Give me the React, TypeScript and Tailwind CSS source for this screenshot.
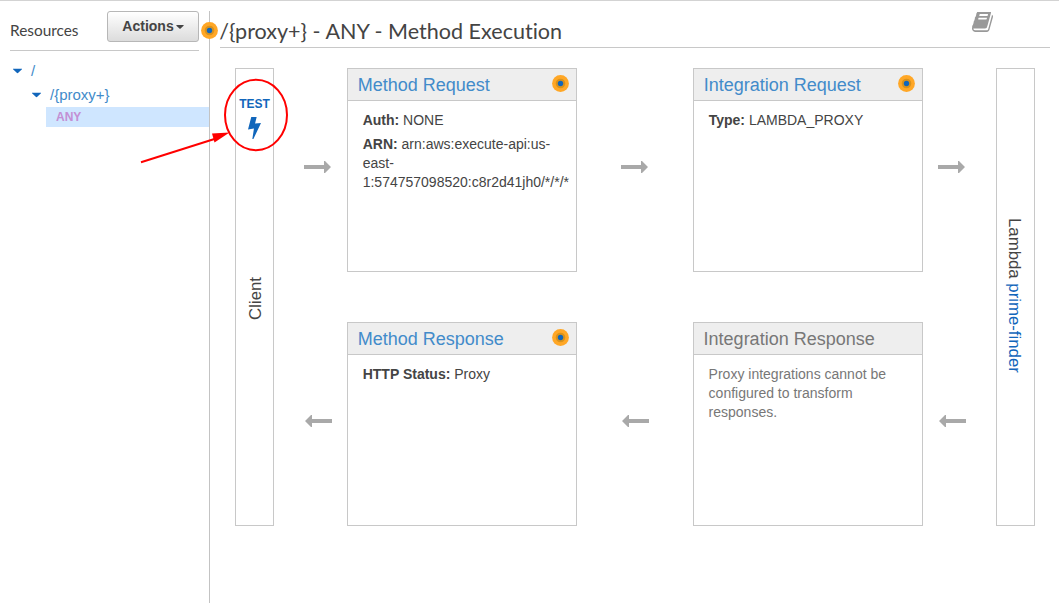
import type { ReactNode } from "react";

function Marker({ className = "" }: { className?: string }) {
  return (
    <svg className={`size-[17px] shrink-0 ${className}`} viewBox="0 0 17 17">
      <circle cx="8.5" cy="8.5" r="8.4" fill="#ffa726" />
      <circle cx="8.5" cy="8.5" r="4.8" fill="#d9921c" />
      <circle cx="8.5" cy="8.5" r="2.7" fill="#1166bb" />
    </svg>
  );
}

function Caret({ className = "" }: { className?: string }) {
  return (
    <svg className={`shrink-0 ${className}`} viewBox="0 0 9 5">
      <path d="M0 0H9V.8L4.500 5 0 .8Z" fill="currentColor" />
    </svg>
  );
}

function Arrow({ left = false, className = "" }: { left?: boolean; className?: string }) {
  return (
    <svg className={`mt-[93px] h-3 w-[27px] ${className}`} viewBox="0 0 27 12">
      <path
        d={left ? "M27 4V8H7V12H6L0 6 6 0H7V4Z" : "M0 4V8H20V12H21L27 6 21 0H20V4Z"}
        fill="#a9a9a9"
      />
    </svg>
  );
}

function Book() {
  return (
    <svg className="h-5 w-[21px]" viewBox="0 0 1664 1664" preserveAspectRatio="none">
      <path
        transform="translate(0 -270) scale(1 1.16)"
        fill="#999"
        d="M1639 478q40 57 18 129l-275 906q-19 64-76.5 107.5t-122.5 43.5h-923q-77 0-148.5-53.5t-99.5-131.5q-24-67-2-127 0-4 3-27t4-37q1-8-3-21.5t-3-19.5q2-11 8-21t16.5-23.5 16.5-23.5q23-38 45-91.5t30-91.5q3-10 .5-30t-.5-28q3-11 17-28t17-23q21-36 42-92t25-90q1-9-2.5-32t.5-28q4-13 22-30.5t22-22.5q19-26 42.5-84.5t27.5-96.5q1-8-3-25.5t-2-26.5q2-8 9-18t18-23 17-21q8-12 16.5-30.5t15-35 16-36 19.5-32 26.5-23.5 36-11.5 47.5 5.5l-1 3q38-9 51-9h761q74 0 114 56t18 130l-274 906q-36 119-71.5 153.5t-128.5 34.5h-869q-27 0-38 15-11 16-1 43 24 70 144 70h923q29 0 56-15.5t35-41.5l300-987q7-22 5-57 38 15 59 43zm-1064 2q-4 13 2 22.5t20 9.5h608q13 0 25.5-9.5t16.5-22.5l21-64q4-13-2-22.5t-20-9.5h-608q-13 0-25.5 9.5t-16.5 22.5zm-83 256q-4 13 2 22.5t20 9.5h608q13 0 25.5-9.5t16.5-22.5l21-64q4-13-2-22.5t-20-9.5h-608q-13 0-25.5 9.5t-16.5 22.5z"
      />
    </svg>
  );
}

function Card({ title, muted = false, children }: { title: string; muted?: boolean; children: ReactNode }) {
  return (
    <section className={`flex flex-col border border-[#c8c8c8] ${muted ? "text-[#777]" : "text-[#444]"}`}>
      <header className={`flex h-8 shrink-0 items-center justify-between border-b border-[#c8c8c8] bg-[#eee] pr-[7px] ${muted ? "pl-[9.6px]" : "pl-[9.7px]"}`}>
        <h2 className={`text-[18px] leading-[30px] ${muted ? "text-[#777]" : "text-[#428bca]"}`}>{title}</h2>
        {!muted && <Marker className="-mt-0.5" />}
      </header>
      <div className={`flex flex-col gap-[5px] pt-[10px] pr-[6px] text-[14px] leading-[19px] ${muted ? "pl-[14.6px]" : "pl-[14.7px]"}`}>
        {children}
      </div>
    </section>
  );
}

function Sidebar() {
  return (
    <aside className="mt-[10px] flex w-[210px] shrink-0 flex-col border-r border-[#c3c3c3]">
      <div className="mr-[10px] ml-[10px] flex h-10 justify-between border-b border-[#c8c8c8]">
        <h2 className="pt-[7px] font-['Lato',sans-serif] text-[15.4px] leading-6 text-[#444]">Resources</h2>
        <button className="flex h-[31px] w-[92px] items-center justify-center gap-[2px] rounded-[3px] border border-[#b7b7b7] bg-linear-to-b from-white to-[#dcdcdc] text-[14px] font-bold text-[#444]">
          Actions
          <Caret className="h-1 w-[8px]" />
        </button>
      </div>
      <ul className="pt-[8px] text-[15px] leading-6 text-[#428bca]">
        <li className="flex items-center pl-[12.5px]">
          <Caret className="mr-[9.5px] h-[5px] w-[9px] -translate-y-[0.5px] text-[#1166bb]" />/
        </li>
        <li className="flex items-center pl-[31.5px]">
          <Caret className="mr-[9.5px] h-[5px] w-[9px] -translate-y-[0.5px] text-[#1166bb]" />/{"{proxy+}"}
        </li>
        <li className="ml-[46px] h-5 bg-[#cfe6ff] pl-[10px] text-[12px] leading-5 font-bold text-[#c38fd4]">ANY</li>
      </ul>
    </aside>
  );
}

export default function App() {
  return (
    <div className="relative flex h-[603px] w-[1059px] overflow-hidden border-t border-[#d3d3d3] bg-white font-['Liberation_Sans',Arial,sans-serif] text-[#444]">
      <Sidebar />
      <main className="flex-1">
        <header className="mt-[10px] mr-[9px] ml-[10px] flex h-[37px] justify-between border-b border-[#c8c8c8] pr-[57px]">
          <h1 className="-ml-[0.7px] pt-[5px] font-['Lato',sans-serif] text-[21.56px] leading-[30px] [font-variant-ligatures:none]">{"/{proxy+} - ANY - Method Execution"}</h1>
          <div className="pt-px">
            <Book />
          </div>
        </header>
        <div className="mt-5 ml-[25px] grid grid-cols-[39px_73px_230px_116px_230px_73px_39px] grid-rows-[204px_204px] gap-y-[50px]">
          <div className="row-span-2 flex flex-col items-center border border-[#c8c8c8]">
            <span className="mt-[27px] text-[12px] leading-4 font-bold text-[#1166bb]">TEST</span>
            <svg className="mt-[5px] h-[22px] w-[13px]" viewBox="0 0 12 22" preserveAspectRatio="none">
              <path d="M3 0H8L6.500 6.500 12 6 5 22H4L5.500 11.500 0 12.500Z" fill="#1166bb" />
            </svg>
            <span className="mt-[138px] ml-[2px] rotate-180 text-[16.8px] leading-5 [writing-mode:vertical-rl]">Client</span>
          </div>
          <Arrow className="ml-[30px]" />
          <Card title="Method Request">
            <p><b>Auth:</b> NONE</p>
            <p><b>ARN:</b> arn:aws:execute-api:us-<br />east-<br />1:574757098520:c8r2d41jh0/*/*/*</p>
          </Card>
          <Arrow className="ml-[44px]" />
          <Card title="Integration Request">
            <p><b>Type:</b> LAMBDA_PROXY</p>
          </Card>
          <Arrow className="ml-[15px]" />
          <div className="row-span-2 flex flex-col items-center border border-[#c8c8c8] pt-[149px]">
            <span className="mr-[3px] text-[16.8px] leading-5 [writing-mode:vertical-rl]">
              Lambda <span className="text-[#1166bb]">prime-finder</span>
            </span>
          </div>
          <Arrow left className="ml-[31px]" />
          <Card title="Method Response">
            <p><b>HTTP Status:</b> Proxy</p>
          </Card>
          <Arrow left className="ml-[45px]" />
          <Card title="Integration Response" muted>
            <p>Proxy integrations cannot be configured to transform responses.</p>
          </Card>
          <Arrow left className="ml-[16px]" />
        </div>
      </main>
      <Marker className="absolute top-[21px] left-[201px]" />
      <svg className="pointer-events-none absolute top-[77px] left-[138px] h-[90px] w-[152px]" viewBox="138 78 152 90">
        <ellipse cx="256" cy="115" rx="31" ry="35.2" fill="none" stroke="#f00" strokeWidth="2" />
        <path d="M141 162.300 216 138.500" stroke="#f00" strokeWidth="2" />
        <path d="M229.500 132.500 212 133.500 214.500 142.500Z" fill="#f00" />
      </svg>
    </div>
  );
}
